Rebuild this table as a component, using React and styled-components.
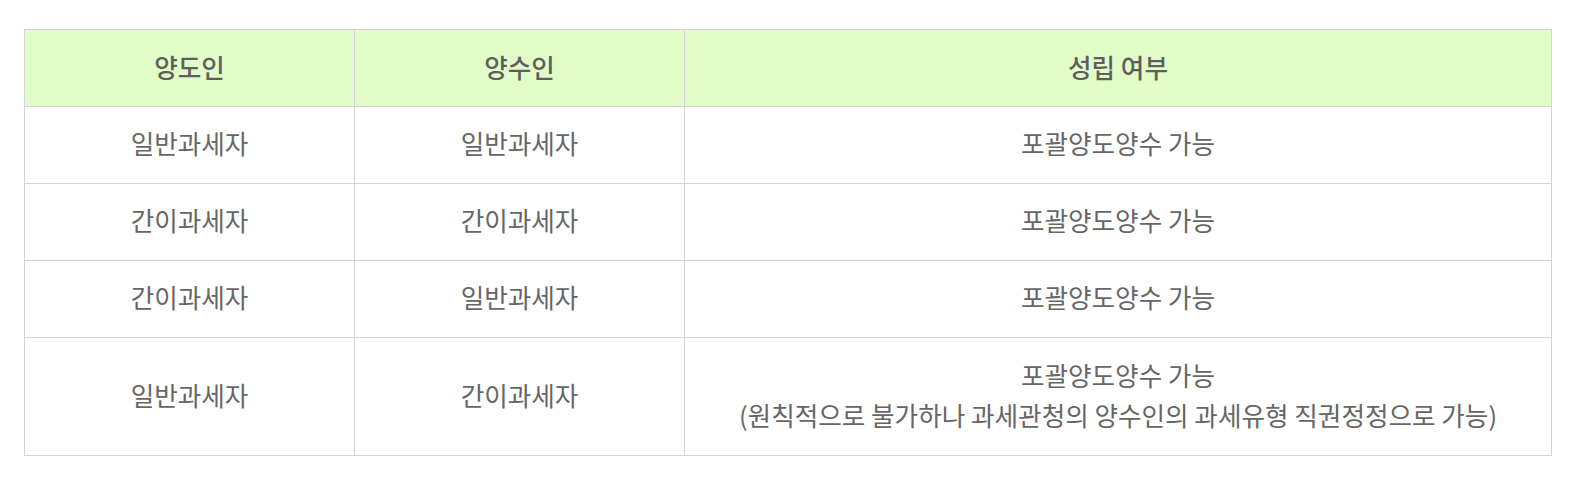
import React from "react";
import styled, { createGlobalStyle } from "styled-components";

const Global = createGlobalStyle`
  html, body { margin: 0; padding: 0; background: #ffffff; }
  body { font-family: "Noto Sans CJK KR", "Noto Sans", sans-serif; }
`;

const Page = styled.div`
  padding: 29px 31px 32px 24px;
`;

const Table = styled.table`
  width: 100%;
  border-collapse: collapse;
  table-layout: fixed;
  color: #666666;
  font-size: 25.6px;
`;

const HeadCell = styled.th`
  background: #e2fcc8;
  border: 1px solid #d3d3d3;
  height: 72px;
  padding: 0 0 4px;
  font-weight: 500;
  color: #5e5e5e;
  text-align: center;
  vertical-align: middle;
  width: ${(p) => p.$w || "auto"};
`;

const Cell = styled.td`
  border: 1px solid #d3d3d3;
  height: ${(p) => (p.$tall ? "113px" : "72px")};
  padding: 0 0 4px;
  text-align: center;
  vertical-align: middle;
  line-height: 40px;
  font-weight: 400;
`;

const rows = [
  ["일반과세자", "일반과세자", ["포괄양도양수 가능"]],
  ["간이과세자", "간이과세자", ["포괄양도양수 가능"]],
  ["간이과세자", "일반과세자", ["포괄양도양수 가능"]],
  [
    "일반과세자",
    "간이과세자",
    [
      "포괄양도양수 가능",
      "(원칙적으로 불가하나 과세관청의 양수인의 과세유형 직권정정으로 가능)",
    ],
  ],
];

export default function App() {
  return (
    <>
      <Global />
      <Page>
        <Table>
          <thead>
            <tr>
              <HeadCell $w="329px">양도인</HeadCell>
              <HeadCell $w="329px">양수인</HeadCell>
              <HeadCell>성립 여부</HeadCell>
            </tr>
          </thead>
          <tbody>
            {rows.map((r, i) => {
              const tall = r[2].length > 1;
              return (
                <tr key={i}>
                  <Cell $tall={tall}>{r[0]}</Cell>
                  <Cell $tall={tall}>{r[1]}</Cell>
                  <Cell $tall={tall}>
                    {r[2].map((line, j) => (
                      <React.Fragment key={j}>
                        {j > 0 && <br />}
                        {line}
                      </React.Fragment>
                    ))}
                  </Cell>
                </tr>
              );
            })}
          </tbody>
        </Table>
      </Page>
    </>
  );
}
